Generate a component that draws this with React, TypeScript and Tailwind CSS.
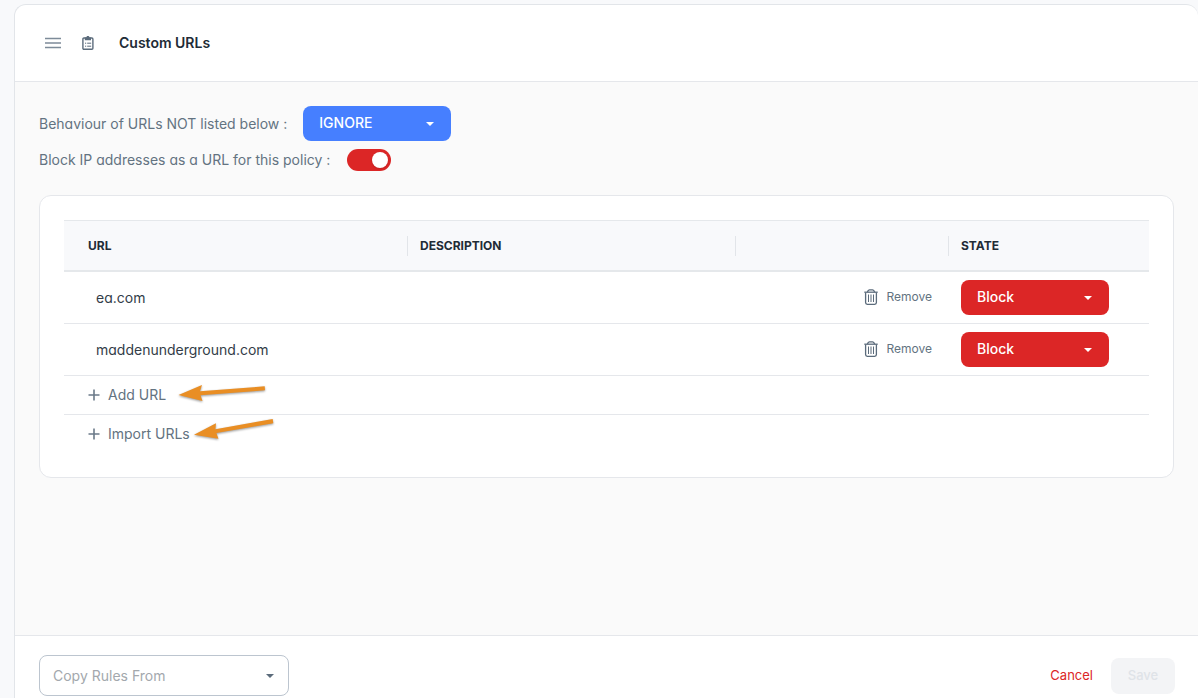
import { useState } from 'react'
import clsx from 'clsx'

type Row = { url: string; description: string; state: string }

const initialRows: Row[] = [
  { url: 'ea.com', description: '', state: 'Block' },
  { url: 'maddenunderground.com', description: '', state: 'Block' },
]

function MenuIcon() {
  return (
    <svg width="16" height="12" viewBox="0 0 16 12" fill="none" stroke="#7d8b99" strokeWidth="1.4">
      <path d="M0 1.5h16M0 6h16M0 10.5h16" />
    </svg>
  )
}

function ClipboardIcon() {
  return (
    <svg width="12" height="14" viewBox="0 0 12 14" fill="none" stroke="#5b6b7b" strokeWidth="1.4">
      <rect x="0.9" y="2" width="10" height="11.3" rx="1" />
      <path d="M2.8 1.4h1.6a1.5 1.5 0 0 1 3 0H9v2.8H2.8z" fill="#5b6b7b" stroke="none" />
      <path d="M3 7.2h1.2M5.2 7.2h4M3 10.2h1.2M5.2 10.2h4" strokeWidth="1" />
    </svg>
  )
}

function TrashIcon() {
  return (
    <svg width="14" height="16" viewBox="0 0 14 16" fill="none" stroke="#5b6b7b" strokeWidth="1.3">
      <path d="M0.3 3.2h13.4" />
      <path d="M3.4 3.2Q4 0.8 5.4 0.8h3.2q1.4 0 2 2.4" />
      <path d="M1.6 3.4v10.2q0 1.7 1.7 1.7h7.4q1.7 0 1.7-1.7V3.4" />
      <path d="M4.5 5.5v7.5M7 5.5v7.5M9.5 5.5v7.5" strokeWidth="1" />
    </svg>
  )
}

function PlusIcon() {
  return (
    <svg width="12" height="12" viewBox="0 0 12 12" stroke="#6b7a89" strokeWidth="1.6">
      <path d="M6 0.5v11M0.5 6h11" />
    </svg>
  )
}

function Caret({ className }: { className: string }) {
  return (
    <svg
      width="8"
      height="4"
      viewBox="0 0 8 4"
      className={clsx('pointer-events-none absolute top-1/2 -translate-y-1/2', className)}
    >
      <path d="M0 0h8L4 4z" fill="currentColor" />
    </svg>
  )
}

function Arrow({ points, className }: { points: string; className: string }) {
  return (
    <svg
      width="90"
      height="32"
      viewBox="0 0 90 32"
      className={clsx('drop-shadow-[0_1px_1px_rgba(0,0,0,0.4)]', className)}
    >
      <polygon points={points} fill="#e98e24" />
    </svg>
  )
}

type ColorSelectProps = {
  label?: string
  id?: string
  value: string
  options: string[]
  color: string
  onChange: (value: string) => void
}

function ColorSelect({ label, id, value, options, color, onChange }: ColorSelectProps) {
  return (
    <div className="relative w-[148px] text-white">
      <select
        id={id}
        aria-label={label}
        value={value}
        onChange={(e) => onChange(e.target.value)}
        className={clsx('block h-[35px] w-full appearance-none rounded-lg pb-0.5 pl-4 pr-8 text-sm font-medium', color)}
      >
        {options.map((o) => (
          <option key={o}>{o}</option>
        ))}
      </select>
      <Caret className="right-[17px]" />
    </div>
  )
}

export default function App() {
  const [rows, setRows] = useState(initialRows)
  const [behaviour, setBehaviour] = useState('IGNORE')

  const setState = (index: number, state: string) =>
    setRows(rows.map((r, i) => (i === index ? { ...r, state } : r)))

  return (
    <div className="flex min-h-screen flex-col bg-[#f8f9fb] pl-3.5 pt-1 font-['Inter',sans-serif] text-sm text-[#637381]">
      <div className="flex grow flex-col overflow-hidden rounded-t-xl border-l border-t border-[#e2e5e9] bg-white">
        {/* Header */}
        <header className="flex h-[77px] items-center border-b border-[#e5e7eb] pl-[30px]">
          <button aria-label="Menu">
            <MenuIcon />
          </button>
          <span className="ml-[21px]">
            <ClipboardIcon />
          </span>
          <h1 className="ml-[25px] font-semibold text-[#212b36]">Custom URLs</h1>
        </header>

        {/* Policy settings */}
        <main className="grow bg-[#fafafa] px-6 pb-6 pt-6">
          <div className="flex items-center gap-4">
            <label htmlFor="behaviour" className="[font-feature-settings:'cv11']">
              Behaviour of URLs NOT listed below :
            </label>
            <ColorSelect
              id="behaviour"
              value={behaviour}
              options={['IGNORE', 'ALLOW', 'BLOCK']}
              color="bg-[#467fff]"
              onChange={setBehaviour}
            />
          </div>
          <div className="mt-2 flex items-center gap-[17px]">
            <label htmlFor="block-ip" className="[font-feature-settings:'cv11']">
              Block IP addresses as a URL for this policy :
            </label>
            <input
              id="block-ip"
              type="checkbox"
              role="switch"
              defaultChecked
              className="flex h-[22px] w-11 appearance-none items-center rounded-full bg-[#c4cdd5] px-[3px] before:size-4 before:rounded-full before:bg-white before:shadow checked:justify-end checked:bg-[#dc2626]"
            />
          </div>

          {/* URL list */}
          <section className="mt-6 rounded-xl border border-[#e5e7eb] bg-white p-6">
            <table className="w-full table-fixed border-separate border-spacing-0 text-left">
              <thead className="text-xs text-[#212b36]">
                <tr className="h-[52px] bg-[#f8f9fb] *:border-b-2 *:border-t *:border-[#e5e8eb] *:p-0 *:font-bold">
                  <th>
                    <div className="h-5 border-r border-[#e2e5e9] pl-6 leading-5">URL</div>
                  </th>
                  <th className="w-[328px]">
                    <div className="h-5 border-r border-[#e2e5e9] pl-3 leading-5">DESCRIPTION</div>
                  </th>
                  <th className="w-[213px]" aria-label="Actions">
                    <div className="h-5 border-r border-[#e2e5e9]" />
                  </th>
                  <th className="w-[200px]">
                    <div className="h-5 pl-3 leading-5">STATE</div>
                  </th>
                </tr>
              </thead>
              <tbody>
                {rows.map((row, i) => (
                  <tr key={row.url} className="h-[52px] *:border-b *:border-[#e5e7eb] *:p-0">
                    <td className="text-[#333d48] [font-feature-settings:'cv11']">
                      <div className="pl-8">{row.url}</div>
                    </td>
                    <td>{row.description}</td>
                    <td>
                      <button
                        className="ml-auto mr-[17px] flex items-center gap-2 pb-0.5 text-xs"
                        onClick={() => setRows(rows.filter((r) => r !== row))}
                      >
                        <TrashIcon />
                        Remove
                      </button>
                    </td>
                    <td>
                      <div className="pl-3">
                        <ColorSelect
                          label={`State of ${row.url}`}
                          value={row.state}
                          options={['Block', 'Allow']}
                          color="bg-[#dc2626]"
                          onChange={(state) => setState(i, state)}
                        />
                      </div>
                    </td>
                  </tr>
                ))}
              </tbody>
            </table>
            <div className="flex h-[39px] items-center border-b border-[#e5e7eb] pl-6">
              <button className="flex items-center gap-2">
                <PlusIcon />
                Add URL
              </button>
              <Arrow
                className="ml-3"
                points="0.5,16 24,6 22,12.3 86.7,7.3 87,11.3 22.5,16.3 24.5,22"
              />
            </div>
            <div className="flex h-[38px] items-center pl-6">
              <button className="flex items-center gap-2">
                <PlusIcon />
                Import URLs
              </button>
              <Arrow
                className="ml-1"
                points="0,16.7 22,5.3 21.4,11.3 78.7,1 79.3,5.3 22.4,15 24.4,20.7"
              />
            </div>
          </section>
        </main>

        {/* Footer */}
        <footer className="flex items-center border-t border-[#e5e7eb] pb-0.5 pl-6 pr-[23px] pt-[19px]">
          <div className="relative w-[250px] text-[#5b6b7b]">
            <select
              aria-label="Copy Rules From"
              defaultValue=""
              className="block h-[41px] w-full appearance-none rounded-lg border border-[#bcc5cf] bg-white pl-[13px] pr-8 text-[#a3a8ad]"
            >
              <option value="">Copy Rules From</option>
            </select>
            <Caret className="right-[15px]" />
          </div>
          <button className="ml-auto text-[13px] text-[#dc2626]">Cancel</button>
          <button
            disabled
            className="ml-[18px] h-9 w-16 rounded-lg bg-[#f3f4f6] text-[13px] font-medium text-[#dfe3e8]"
          >
            Save
          </button>
        </footer>
      </div>
    </div>
  )
}
